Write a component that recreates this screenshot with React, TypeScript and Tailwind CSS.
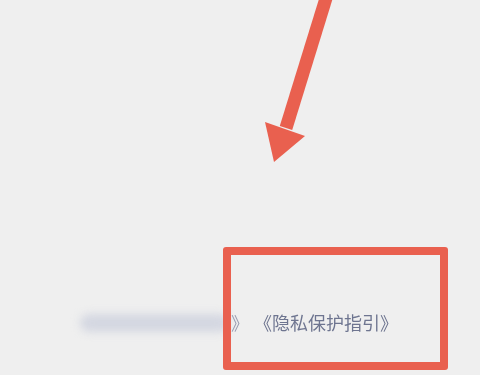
import React from "react";

export default function App() {
  return (
    <div className="relative w-[480px] h-[375px] overflow-hidden bg-[#efefef]" style={{ fontFamily: '"Noto Sans CJK SC", "Noto Sans", sans-serif' }}>
      <div className="flex flex-col h-full">
        <div className="flex-1" />
        <div className="flex items-center pl-[80px] pb-[39px]">
          <div className="w-[149px] h-[18px] rounded-full bg-[#d4d7e1] blur-[4px]" />
          <span className="ml-[2px] text-[18px] text-[#9a9eb3] blur-[0.6px]">》</span>
          <span className="ml-[5px] text-[18px] text-[#6e7590] blur-[0.4px]">《隐私保护指引》</span>
        </div>
      </div>
      <svg className="absolute left-0 top-0" width="480" height="375" viewBox="0 0 480 375">
        <line x1="327" y1="-5" x2="286" y2="128" stroke="#e9604f" strokeWidth="13" />
        <polygon points="265,122 305,136 274,162" fill="#e9604f" />
      </svg>
      <div className="absolute left-[223px] top-[247px] w-[225px] h-[123px] rounded-[3px] border-[8px] border-[#e9604f]" />
    </div>
  );
}
